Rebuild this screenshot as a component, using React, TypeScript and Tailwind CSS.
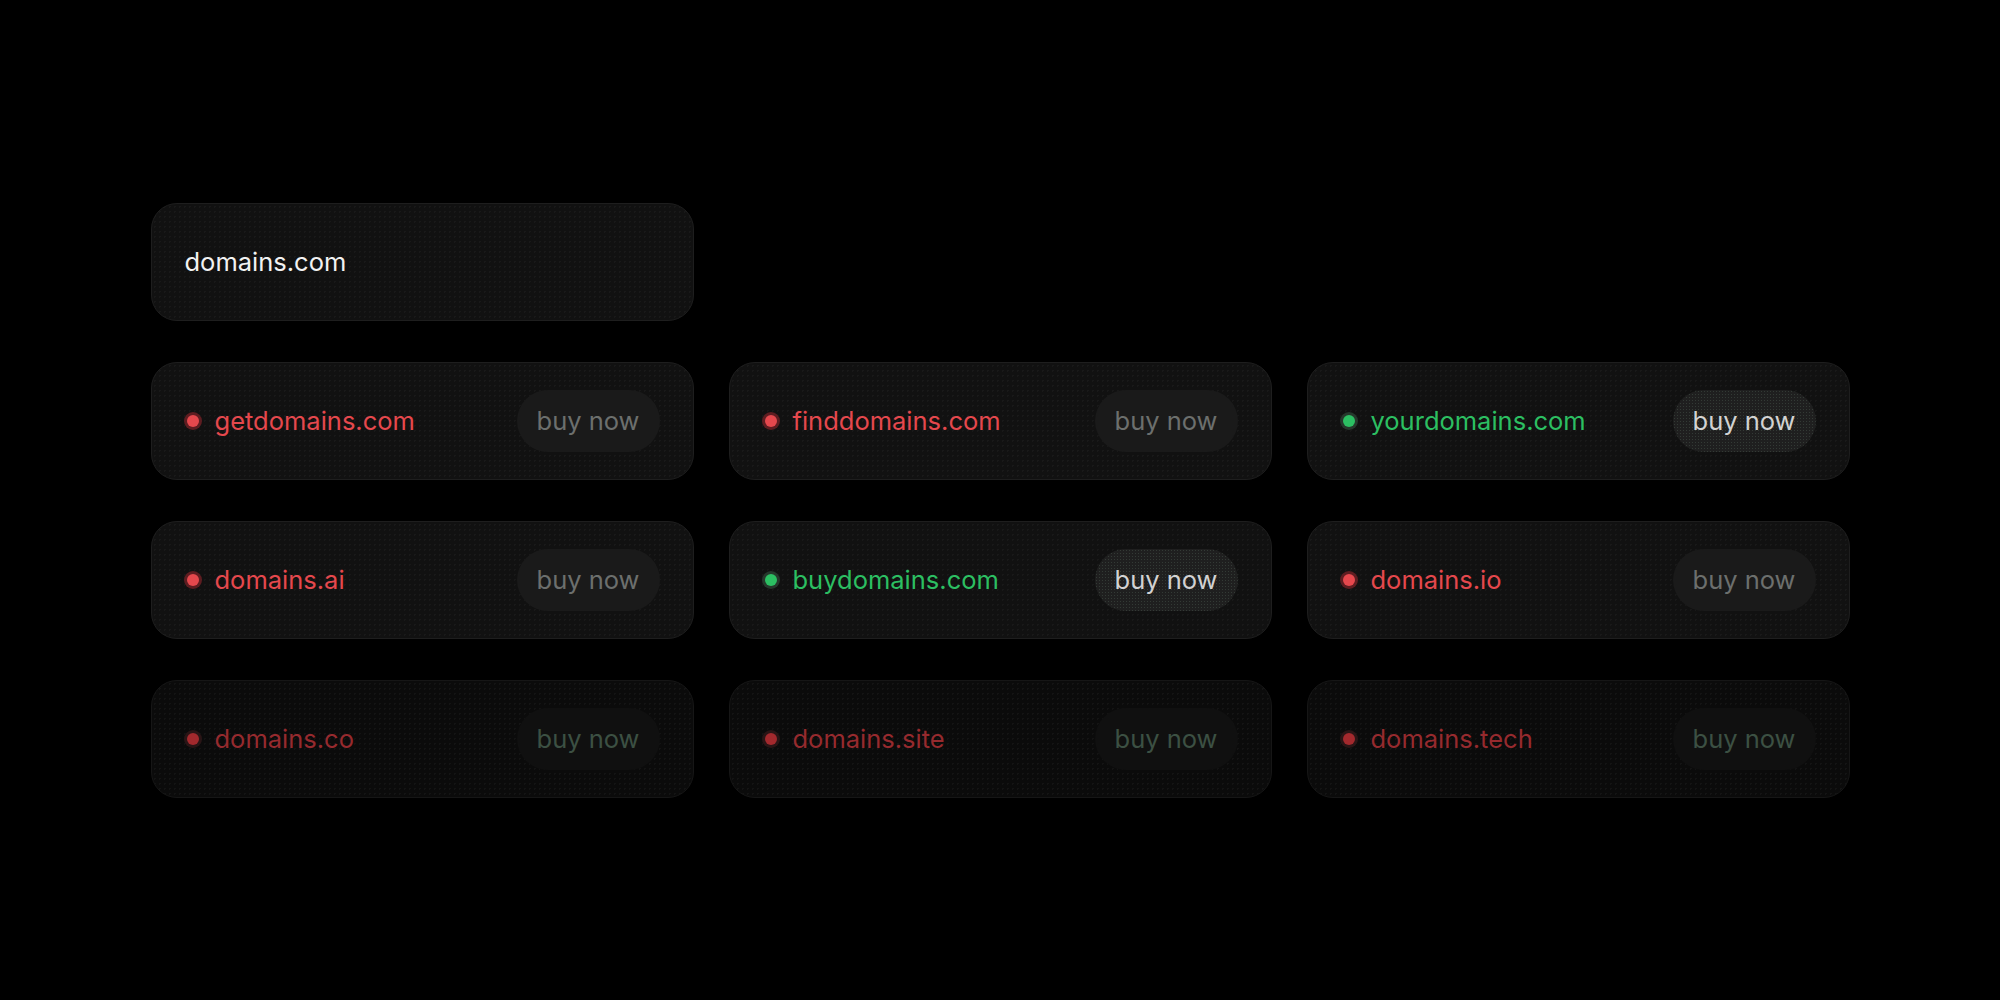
import React from 'react';

type Domain = {
  name: string;
  available: boolean;
  faded?: boolean;
};

const domains: Domain[] = [
  { name: 'getdomains.com', available: false },
  { name: 'finddomains.com', available: false },
  { name: 'yourdomains.com', available: true },
  { name: 'domains.ai', available: false },
  { name: 'buydomains.com', available: true },
  { name: 'domains.io', available: false },
  { name: 'domains.co', available: false, faded: true },
  { name: 'domains.site', available: false, faded: true },
  { name: 'domains.tech', available: false, faded: true },
];

const grain = 'bg-[radial-gradient(rgba(255,255,255,0.035)_1px,transparent_1px)] bg-[length:5px_5px]';

const DomainCard: React.FC<{ d: Domain }> = ({ d }) => {
  const cardBg = d.faded ? 'bg-[#0b0b0b] border-[#161616]' : 'bg-[#111111] border-[#1e1e1e]';
  const textColor = d.available ? 'text-[#2cbf62]' : d.faded ? 'text-[#962a2e]' : 'text-[#e5484d]';
  const dotInner = d.available ? 'bg-[#2cbf62]' : d.faded ? 'bg-[#a3292d]' : 'bg-[#e5484d]';
  const dotRing = d.available ? 'bg-[#26382c]' : d.faded ? 'bg-[#2a1516]' : 'bg-[#5e1d21]';
  const btn = d.available
    ? 'bg-[#1f1f1f] text-[#d2d2d2] bg-[radial-gradient(rgba(160,200,170,0.16)_1px,transparent_1px)] bg-[length:3px_3px]'
    : d.faded
      ? 'bg-[#101010] text-[#3c5043]'
      : 'bg-[#1a1a1a] text-[#6c6f6d]';

  return (
    <div className={`h-[118px] rounded-[26px] border ${cardBg} ${grain} flex items-center justify-between pl-[32px] pr-[33px]`}>
      <div className="flex items-center gap-[13px]">
        <span className={`w-[18px] h-[18px] rounded-full flex items-center justify-center ${dotRing}`}>
          <span className={`w-[12px] h-[12px] rounded-full ${dotInner}`} />
        </span>
        <span className={`text-[25.5px] leading-none ${textColor}`}>{d.name}</span>
      </div>
      <button className={`h-[62px] w-[143px] rounded-full text-[25.5px] leading-none flex items-center justify-center ${btn}`}>
        buy now
      </button>
    </div>
  );
};

export default function App() {
  return (
    <div
      className="min-h-screen w-full bg-black flex items-center justify-center"
      style={{ fontFamily: 'Inter, "Noto Sans", sans-serif' }}
    >
      <div className="grid grid-cols-3 w-[1699px] gap-x-[35px] gap-y-[41px]">
        {/* Search input */}
        <div className={`h-[118px] rounded-[26px] border bg-[#111111] border-[#1e1e1e] ${grain} flex items-center px-[33px]`}>
          <span className="text-[25.5px] leading-none text-[#f2f2f2]">domains.com</span>
        </div>
        <div />
        <div />

        {domains.map((d) => (
          <DomainCard key={d.name} d={d} />
        ))}
      </div>
    </div>
  );
}
